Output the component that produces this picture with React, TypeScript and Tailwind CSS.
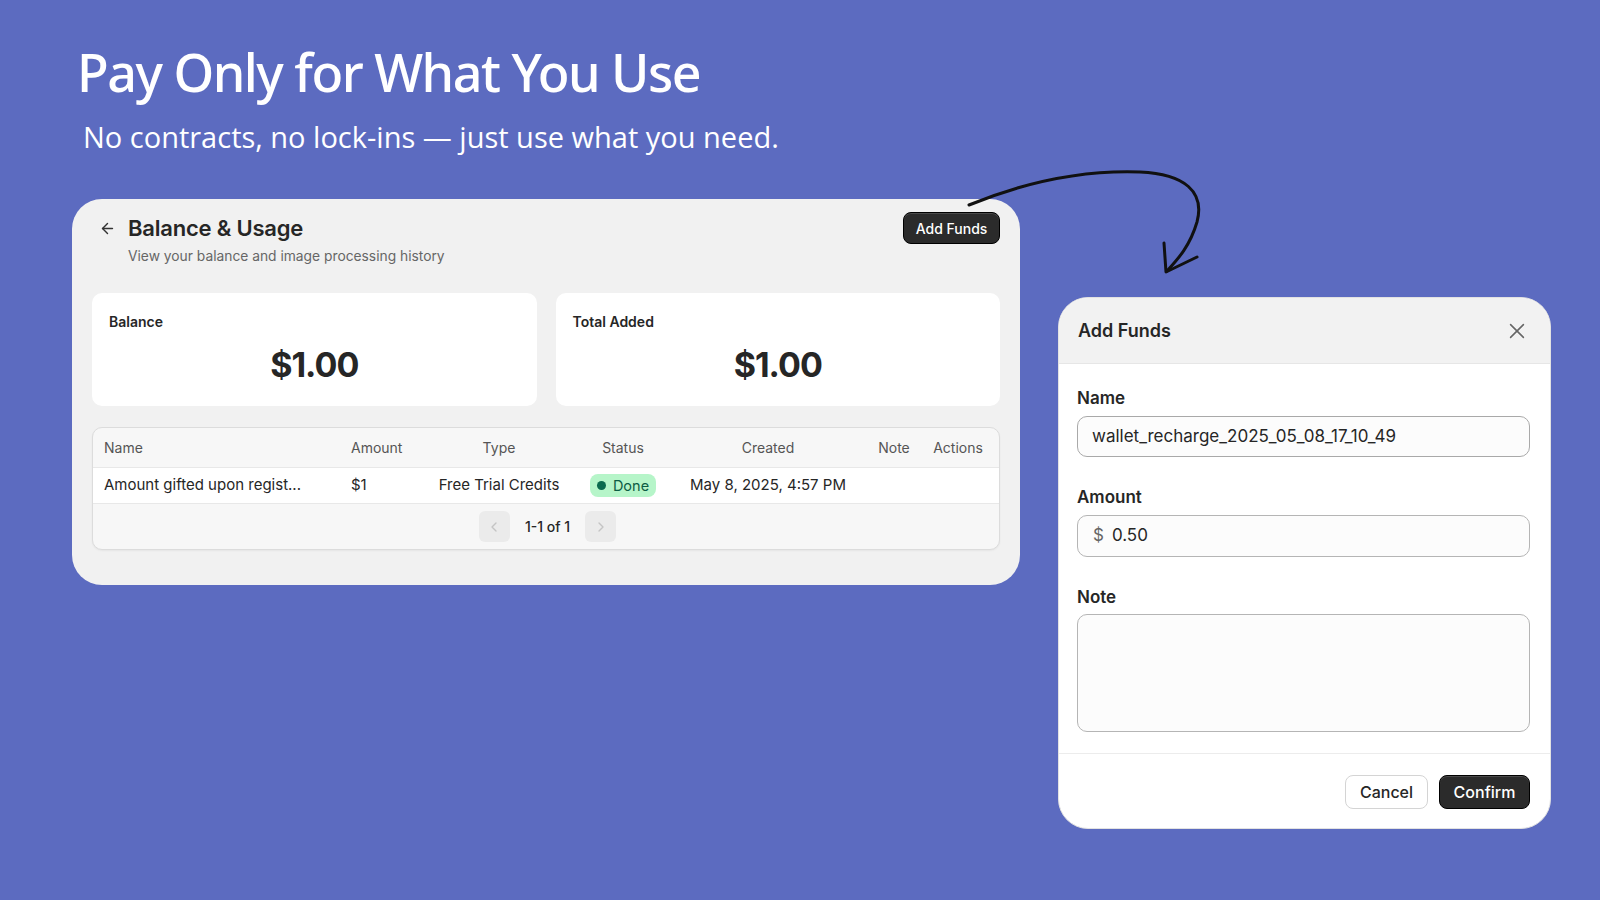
import React from "react";

function BackArrow() {
  return (
    <svg width="17" height="17" viewBox="0 0 24 24" fill="none" stroke="#333" strokeWidth="2" strokeLinecap="round" strokeLinejoin="round">
      <path d="M19 12H5" />
      <path d="M12 19l-7-7 7-7" />
    </svg>
  );
}

function Chevron({ dir }: { dir: "left" | "right" }) {
  return (
    <svg width="16" height="16" viewBox="0 0 24 24" fill="none" stroke="#c4c4c4" strokeWidth="2" strokeLinecap="round" strokeLinejoin="round">
      {dir === "left" ? <path d="M15 18l-6-6 6-6" /> : <path d="M9 18l6-6-6-6" />}
    </svg>
  );
}

function CloseIcon() {
  return (
    <svg width="22" height="22" viewBox="0 0 24 24" fill="none" stroke="#666" strokeWidth="1.7" strokeLinecap="round">
      <path d="M5 5l14 14" />
      <path d="M19 5L5 19" />
    </svg>
  );
}

export default function App() {
  return (
    <div
      className="relative w-[1600px] h-[900px] overflow-hidden bg-[#5c6bc0]"
      style={{ fontFamily: "Inter, 'Noto Sans', sans-serif" }}
    >
      <div className="pl-[77px] pt-[37px]">
        <h1
          className="text-[52px] leading-[70px] font-medium tracking-[-1.5px] text-white"
          style={{ fontFamily: "'Noto Sans', 'Open Sans', sans-serif" }}
        >
          Pay Only for What You Use
        </h1>
        <p
          className="pl-[6px] mt-[10px] text-[29px] leading-[40px] text-white"
          style={{ fontFamily: "'Open Sans', 'Noto Sans', sans-serif" }}
        >
          No contracts, no lock-ins — just use what you need.
        </p>
      </div>

      <div className="flex items-start pl-[72px] mt-[42px] gap-[38px]">
        {/* Main card */}
        <div className="w-[948px] rounded-[30px] bg-[#f1f1f1] px-[20px] pt-[13px] pb-[35px]">
          <div className="flex justify-between items-start">
            <div className="pl-[7px]">
              <div className="flex items-center h-[32px] gap-[12px]">
                <BackArrow />
                <h2 className="text-[22px] font-semibold text-[#262626] tracking-[-0.2px]">Balance &amp; Usage</h2>
              </div>
              <p className="pl-[29px] mt-[2px] text-[13.8px] leading-[20px] text-[#666]">
                View your balance and image processing history
              </p>
            </div>
            <button className="h-[32px] w-[97px] rounded-[8px] bg-[#2b2b2b] border border-black text-white text-[14px] font-medium shadow-[inset_0_1px_0_rgba(255,255,255,0.15)]">
              Add Funds
            </button>
          </div>

          <div className="grid grid-cols-2 gap-[19px] mt-[27px]">
            {["Balance", "Total Added"].map((label) => (
              <div key={label} className="bg-white rounded-[10px] h-[113px] pt-[19px] pl-[17px]">
                <div className="text-[14px] leading-[20px] font-semibold text-[#262626]">{label}</div>
                <div className="mt-[13px] text-center pr-[17px] text-[34px] leading-[40px] font-bold tracking-[-1px] text-[#262626]">
                  $1.00
                </div>
              </div>
            ))}
          </div>

          <div className="mt-[21px] rounded-[10px] border border-[#dcdcdc] bg-[#f7f7f7] overflow-hidden shadow-[0_1px_2px_rgba(0,0,0,0.05)]">
            <div className="grid grid-cols-[247px_91px_136px_112px_178px_74px_54px] h-[40px] items-center text-[14px] text-[#555] border-b border-[#e8e8e8]">
              <div className="pl-[11px]">Name</div>
              <div className="pl-[11px]">Amount</div>
              <div className="text-center">Type</div>
              <div className="text-center">Status</div>
              <div className="text-center">Created</div>
              <div className="text-center">Note</div>
              <div className="text-center">Actions</div>
            </div>
            <div className="grid grid-cols-[247px_91px_136px_112px_178px_74px_54px] h-[36px] items-center text-[15px] text-[#262626] bg-white border-b border-[#e8e8e8]">
              <div className="pl-[11px] whitespace-nowrap">Amount gifted upon regist...</div>
              <div className="pl-[11px]">$1</div>
              <div className="text-center whitespace-nowrap">Free Trial Credits</div>
              <div className="flex justify-center">
                <span className="inline-flex items-center gap-[7px] h-[23px] px-[7px] rounded-[8px] bg-[#b6f5c9] text-[#0c5c44] text-[14.5px]">
                  <span className="w-[9px] h-[9px] rounded-full bg-[#0b6b4e]" />
                  Done
                </span>
              </div>
              <div className="text-center whitespace-nowrap">May 8, 2025, 4:57 PM</div>
              <div />
              <div />
            </div>
            <div className="h-[45px] flex items-center justify-center gap-[15px] pl-[3px]">
              <div className="w-[31px] h-[31px] rounded-[6px] bg-[#ebebeb] flex items-center justify-center">
                <Chevron dir="left" />
              </div>
              <span className="text-[14px] font-medium text-[#262626]">1-1 of 1</span>
              <div className="w-[31px] h-[31px] rounded-[6px] bg-[#ebebeb] flex items-center justify-center">
                <Chevron dir="right" />
              </div>
            </div>
          </div>
        </div>

        {/* Dialog */}
        <div className="mt-[98px] w-[493px] rounded-[30px] bg-white overflow-hidden border border-[#e2e2e2]">
          <div className="h-[66px] bg-[#f2f2f2] border-b border-[#e6e6e6] flex items-center justify-between pl-[19px] pr-[22px]">
            <span className="text-[18px] font-semibold text-[#262626]">Add Funds</span>
            <CloseIcon />
          </div>
          <div className="pl-[18px] pr-[20px] pt-[22px] pb-[21px] border-b border-[#ececec]">
            <div className="text-[17px] leading-[24px] font-semibold text-[#262626]">Name</div>
            <div className="mt-[6px] h-[41px] rounded-[10px] border border-[#a9a9a9] bg-[#fcfcfc] flex items-center pl-[14px] text-[17px] text-[#262626]">
              wallet_recharge_2025_05_08_17_10_49
            </div>
            <div className="mt-[28px] text-[17px] leading-[24px] font-semibold text-[#262626]">Amount</div>
            <div className="mt-[6px] h-[42px] rounded-[10px] border border-[#b5b5b5] bg-[#fcfcfc] flex items-center pl-[15px] gap-[8px] text-[17px] text-[#262626]">
              <span className="text-[#666]">$</span>
              <span>0.50</span>
            </div>
            <div className="mt-[28px] text-[17px] leading-[24px] font-semibold text-[#262626]">Note</div>
            <div className="mt-[5px] h-[118px] rounded-[10px] border border-[#b5b5b5] bg-[#fcfcfc]" />
          </div>
          <div className="flex justify-end gap-[11px] pr-[20px] pt-[21px] pb-[19px]">
            <button className="h-[34px] w-[83px] rounded-[8px] border border-[#d4d4d4] bg-white text-[16px] font-medium text-[#262626]">
              Cancel
            </button>
            <button className="h-[34px] w-[91px] rounded-[8px] border border-black bg-[#2b2b2b] text-[16px] font-medium text-white shadow-[inset_0_1px_0_rgba(255,255,255,0.15)]">
              Confirm
            </button>
          </div>
        </div>
      </div>

      {/* Hand-drawn arrow */}
      <svg className="absolute left-0 top-0 pointer-events-none" width="1600" height="900" fill="none">
        <path
          d="M969 205 C 1030 180, 1085 170, 1140 172 C 1185 174, 1205 192, 1197 222 C 1190 246, 1178 259, 1167 271"
          stroke="#111"
          strokeWidth="3"
          strokeLinecap="round"
        />
        <path d="M1164 243 L1166 272 L1197 257" stroke="#111" strokeWidth="3" strokeLinecap="round" strokeLinejoin="round" />
      </svg>
    </div>
  );
}
